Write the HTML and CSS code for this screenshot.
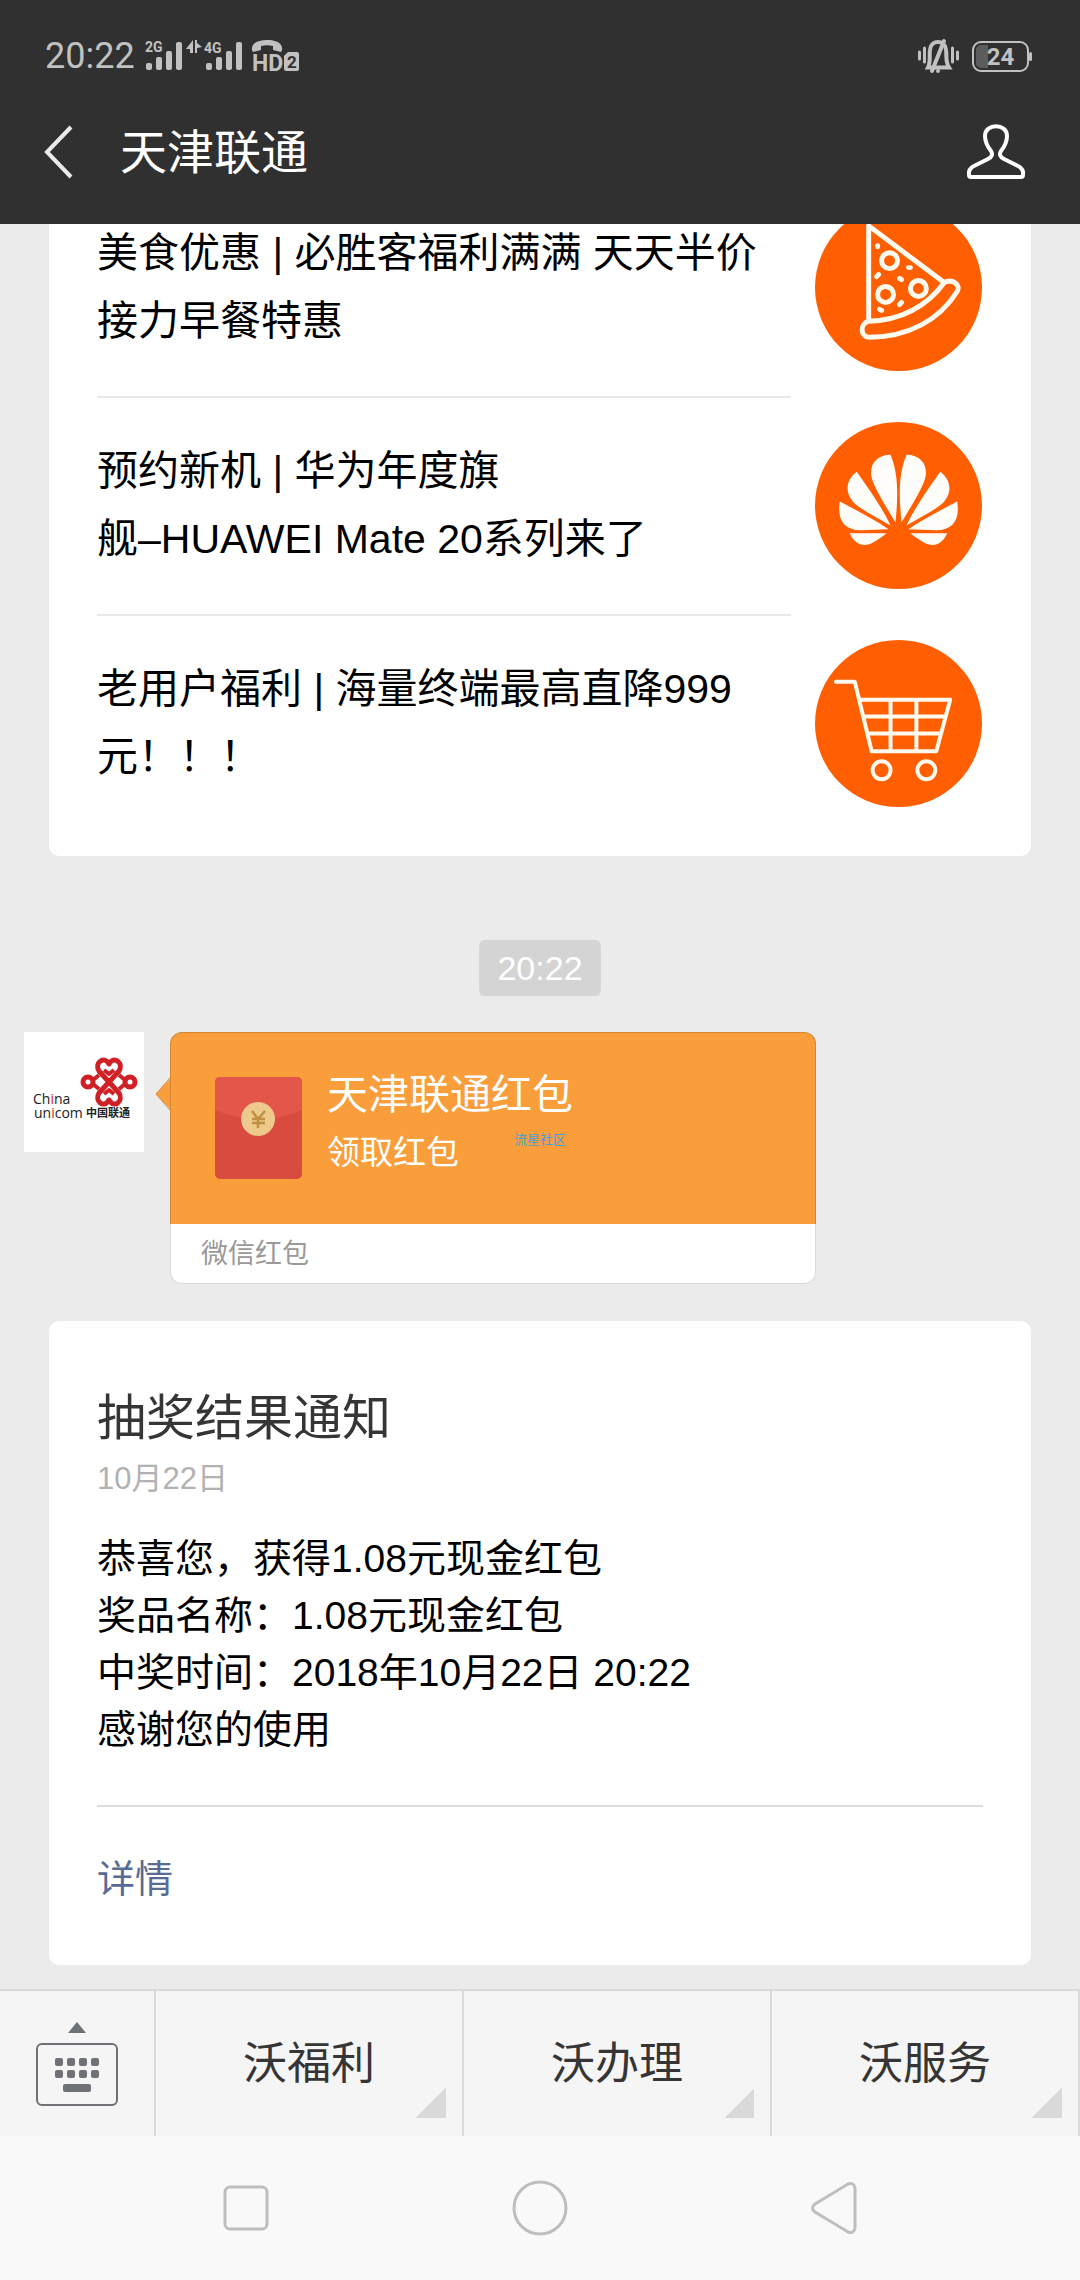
FILE: index.html
```html
<!DOCTYPE html>
<html lang="zh-CN">
<head>
<meta charset="utf-8">
<meta name="viewport" content="width=device-width, initial-scale=1">
<title>天津联通</title>
<link rel="stylesheet" href="styles.css">
</head>
<body>
<header class="top">
  <div class="status">
    <time class="clock">20:22</time>
    <svg class="signals" viewBox="142 36 160 38" width="160" height="38" fill="#c1c1c1" aria-hidden="true">
      <text x="145" y="51" class="net">2G</text>
      <rect x="146" y="62" width="6" height="7" rx="2"/><rect x="156" y="56" width="6" height="13" rx="2"/><rect x="166" y="50" width="6" height="19" rx="2"/><rect x="176" y="41" width="6" height="28" rx="2"/>
      <path d="M193 39v13h-3v-4h-4zM195 39h2v3l5 4-5 1v5h-2z"/>
      <text x="204" y="52" class="net">4G</text>
      <rect x="206" y="62" width="6" height="7" rx="2"/><rect x="216" y="56" width="6" height="13" rx="2"/><rect x="226" y="50" width="6" height="19" rx="2"/><rect x="236" y="41" width="6" height="28" rx="2"/>
      <path d="M252 49c-1-7 6-10 15-10s16 3 15 10l-1 2-8-2v-4c-4-1-8-1-12 0v4l-8 2z"/>
      <text x="252" y="70" class="hd">HD</text>
      <path d="M288 51h9a2 2 0 0 1 2 2v15a2 2 0 0 1-2 2h-11a2 2 0 0 1-2-2V55z"/>
      <text x="287" y="67" class="slot">2</text>
    </svg>
    <svg class="vibrate" viewBox="917 36 44 38" width="44" height="38" fill="none" stroke="#c1c1c1" stroke-width="3" stroke-linecap="round" aria-hidden="true">
      <path d="M919.500 51v7M924.500 47v14M952.500 47v14M957.500 51v7"/>
      <path d="M928 66.500h21c-4-6-2-12-3-18-1-10-15-10-16 0-1 6 1 12-2 18z" stroke-width="4" stroke-linecap="butt"/>
      <path d="M944 40l-12 30M938 70v0" stroke-width="4"/>
    </svg>
    <div class="battery"><span>24</span></div>
  </div>
  <div class="titlebar">
    <button class="icon-btn" aria-label="返回">
      <svg viewBox="0 0 30 54" width="30" height="54" fill="none" stroke="#ebebeb" stroke-width="4"><path d="M27 2L3 27l24 25"/></svg>
    </button>
    <h1>天津联通</h1>
    <button class="icon-btn" aria-label="公众号资料">
      <svg viewBox="0 0 58 56" width="58" height="56" fill="none" stroke="#fff" stroke-width="4"><path d="M2 51q-1-6 5-9l14-7q6-3 3-8c-4-5-6-9-6-15 0-13 22-13 22 0 0 6-2 10-6 15q-3 5 3 8l14 7q6 3 5 9 0 2-2 2H4q-2 0-2-2z"/></svg>
    </button>
  </div>
</header>

<main class="chat">
  <section class="card articles">
    <a class="article" href="#">
      <span class="headline">美食优惠 | 必胜客福利满满 天天半价接力早餐特惠</span>
      <svg class="thumb" viewBox="0 0 168 168" fill="none" stroke="#fffaf0" stroke-width="5" stroke-linecap="round" stroke-linejoin="round" aria-hidden="true">
        <circle cx="84" cy="84" r="84" fill="#ff5f00" stroke="none"/>
        <path d="M54 118V22l76 57c-17 24-44 38-76 39zM130 79c8-4 17 2 13 9-18 29-50 46-88 46-10 0-10-14-1-16"/>
        <circle cx="75" cy="57" r="8"/><circle cx="104" cy="85" r="8"/><circle cx="71" cy="91" r="8"/>
        <path d="M63 42v1M64 71l-2 2M94 64h2M85 75l2 1M85 101l2-2M65 106l2 1"/>
      </svg>
    </a>
    <a class="article" href="#">
      <span class="headline">预约新机 | 华为年度旗<br>舰–HUAWEI Mate 20系列来了</span>
      <svg class="thumb" viewBox="0 0 168 168" fill="#fffdfa" aria-hidden="true">
        <circle cx="84" cy="84" r="84" fill="#ff5f00"/>
        <g id="petals">
          <path d="M76 33C60 33 53 46 58 59c3 9 15 29 23 42 2-22 4-46-5-68z"/>
          <path d="M42 50C31 58 30 71 38 80c6 7 26 17 38 24-8-17-22-37-34-54z"/>
          <path d="M25 80c-3 18 4 29 21 29l28-1C60 98 42 89 25 80z"/>
          <path d="M35 112c5 11 13 14 22 10 6-3 11-7 15-10z"/>
        </g>
        <use href="#petals" transform="matrix(-1 0 0 1 168 0)"/>
      </svg>
    </a>
    <a class="article" href="#">
      <span class="headline">老用户福利 | 海量终端最高直降999元！！！</span>
      <svg class="thumb" viewBox="0 0 168 168" fill="none" stroke="#fffaf0" stroke-width="4" stroke-linecap="round" stroke-linejoin="round" aria-hidden="true">
        <circle cx="84" cy="84" r="84" fill="#ff5f00" stroke="none"/>
        <path d="M21 42h19l17 70h65l14-52H46M50 77h81M54 94h73M76 60v52M102 60v52"/>
        <circle cx="67" cy="131" r="9"/><circle cx="112" cy="131" r="9"/>
      </svg>
    </a>
  </section>

  <time class="stamp">20:22</time>

  <div class="message">
    <svg class="avatar" viewBox="0 0 120 120" width="120" height="120" role="img" aria-label="中国联通">
      <rect width="120" height="120" fill="#fff"/>
      <g fill="none" stroke="#d11f26" stroke-width="5" stroke-linejoin="round">
        <path d="M75 61l20-22c5-8-5-16-10-7-5-9-15-1-10 7l20 22c5 8-5 16-10 7-5 9-15 1-10-7z"/>
        <circle cx="64" cy="50" r="5"/><circle cx="106" cy="50" r="5"/>
        <path d="M69 48l6-5M69 52l6 5M101 48l-6-5M101 52l-6 5M80 38l5 4 5-4M80 62l5-4 5 4" stroke-width="4"/>
      </g>
      <text x="9" y="72" class="brand">Ch<tspan fill="#d11f26">i</tspan>na</text>
      <text x="10" y="86" class="brand">un<tspan fill="#d11f26">i</tspan>com</text>
      <text x="62" y="85" class="brand-cn">中国联通</text>
    </svg>
    <a class="packet" href="#">
      <svg class="tail" viewBox="0 0 16 34" width="16" height="34" aria-hidden="true"><path d="M16 1L1 17l15 16z" fill="#fa9d3b"/><path d="M15 1L1 17l14 16" fill="none" stroke="#d48634"/></svg>
      <div class="packet-body">
        <svg viewBox="0 0 87 102" width="87" height="102" aria-hidden="true">
          <rect width="87" height="102" rx="5" fill="#d84b3e"/>
          <path d="M0 33V5a5 5 0 0 1 5-5h77a5 5 0 0 1 5 5v28q-43 19-87 0z" fill="#e4554a"/>
          <circle cx="43" cy="42" r="17" fill="#edc98c"/>
          <path d="M37 34l6 8 7-8M43 42v9M37 42h13M37 46h13" stroke="#bf8f43" stroke-width="2.500" fill="none"/>
        </svg>
        <div class="packet-text">
          <strong>天津联通红包</strong>
          <span>领取红包</span>
        </div>
        <small class="mark">流星社区</small>
      </div>
      <div class="packet-foot">微信红包</div>
    </a>
  </div>

  <section class="card notice">
    <h2>抽奖结果通知</h2>
    <time class="date">10月22日</time>
    <p>恭喜您，获得1.08元现金红包<br>奖品名称：1.08元现金红包<br>中奖时间：2018年10月22日 20:22<br>感谢您的使用</p>
    <a class="detail" href="#">详情</a>
  </section>
</main>

<footer>
  <div class="menu">
    <button class="keyboard" aria-label="切换键盘">
      <svg viewBox="0 0 84 84" width="84" height="84" fill="#6e7277" aria-hidden="true">
        <path d="M33 11l9-11 9 11z"/>
        <rect x="2" y="22" width="80" height="61" rx="5" fill="none" stroke="#6e7277" stroke-width="2"/>
        <g id="keys"><rect x="20" y="36" width="8" height="8" rx="2"/><rect x="32" y="36" width="8" height="8" rx="2"/><rect x="44" y="36" width="8" height="8" rx="2"/><rect x="56" y="36" width="8" height="8" rx="2"/></g>
        <use href="#keys" y="12"/>
        <rect x="28" y="62" width="28" height="8" rx="2"/>
      </svg>
    </button>
    <button class="entry">沃福利</button>
    <button class="entry">沃办理</button>
    <button class="entry">沃服务</button>
  </div>
  <nav class="sysnav">
    <button aria-label="最近任务"><svg viewBox="0 0 56 56" width="56" height="56"><rect x="7" y="7" width="42" height="42" rx="5"/></svg></button>
    <button aria-label="主屏幕"><svg viewBox="0 0 56 56" width="56" height="56"><circle cx="28" cy="28" r="26"/></svg></button>
    <button aria-label="返回"><svg viewBox="0 0 56 56" width="56" height="56"><path d="M9 24L42 4q6-2 7 4v40q-1 6-7 4L9 32q-5-4 0-8z"/></svg></button>
  </nav>
</footer>
</body>
</html>
```
FILE: styles.css
```css
* { box-sizing: border-box; }

body {
  margin: 0;
  height: 100vh;
  display: flex;
  flex-direction: column;
  background: #ebebeb;
  color: #000;
  font-family: "Liberation Sans", "Noto Sans CJK SC", sans-serif;
}

h1, h2, p { margin: 0; font-weight: 400; }
a { color: inherit; text-decoration: none; }
button { padding: 0; border: 0; background: none; color: inherit; font: inherit; }
svg { display: block; flex: none; }

/* Status bar and title */
.top { flex: none; background: #303030; color: #fff; }

.status {
  display: flex;
  align-items: center;
  height: 112px;
  padding: 0 51px 0 45px;
  color: #c1c1c1;
  font-family: Roboto, sans-serif;
}
.clock { font-size: 36px; line-height: 40px; }
.signals { margin-left: 7px; overflow: visible; }
.net { font: 700 14px Roboto, sans-serif; }
.hd { font: 700 23px Roboto, sans-serif; }
.slot { font: 700 17px Roboto, sans-serif; fill: #303030; }
.vibrate { margin-left: auto; }
.battery {
  position: relative;
  width: 57px;
  height: 31px;
  margin-left: 11px;
  padding: 2px;
  border: 2px solid #c1c1c1;
  border-radius: 9px;
  background: linear-gradient(90deg, #5c5c5c 12px, transparent 12px) content-box;
  font-size: 24px;
  font-weight: 700;
  line-height: 24px;
  text-align: center;
}
.battery::after {
  content: "";
  position: absolute;
  left: 55px;
  top: 9px;
  width: 3px;
  height: 9px;
  border-radius: 2px;
  background: #c1c1c1;
}

.titlebar {
  display: flex;
  align-items: center;
  height: 112px;
  padding: 0 55px 32px 44px;
}
.titlebar h1 { flex: 1; margin-left: 46px; padding-top: 2px; font-size: 47px; line-height: 64px; }

/* Conversation, kept scrolled to its newest message */
.chat {
  flex: 1;
  min-height: 0;
  overflow: hidden;
  display: flex;
  flex-direction: column;
  justify-content: flex-end;
  padding-bottom: 24px;
}
.chat > * { flex: none; }

.card {
  margin: 0 49px;
  padding: 0 48px;
  border-radius: 10px;
  background: #fff;
}

.articles { padding-bottom: 24px; }
.article {
  display: grid;
  grid-template-columns: 1fr 168px;
  column-gap: 24px;
  align-items: start;
}
.headline {
  padding: 39px 24px 41px 0;
  border-bottom: 2px solid #e8e8e8;
  font-size: 41px;
  line-height: 68px;
}
.article:last-child .headline { border-bottom: 0; }
.thumb { width: 167px; height: 167px; margin-top: 24px; }

.stamp {
  align-self: center;
  margin: 84px 0 36px;
  padding: 0 18px;
  border-radius: 6px;
  background: #d4d4d4;
  color: #fff;
  font-size: 34px;
  line-height: 56px;
}

.message { display: flex; align-items: flex-start; gap: 26px; margin: 0 24px 37px; }
.brand { font: 14px "Open Sans", sans-serif; fill: #222; }
.brand-cn { font: 700 11px "Noto Sans CJK SC", sans-serif; fill: #222; }

.packet { position: relative; width: 646px; }
.tail { position: absolute; left: -15px; top: 45px; }
.packet-body {
  position: relative;
  display: flex;
  gap: 25px;
  height: 192px;
  padding: 44px;
  border: 1px solid #d48634;
  border-bottom: 0;
  border-radius: 12px 12px 0 0;
  background: #fa9d3b;
  color: #fff;
}
.packet-text { display: flex; flex-direction: column; margin-top: -10px; }
.packet-text strong { font-size: 41px; font-weight: 400; line-height: 56px; }
.packet-text span { font-size: 33px; line-height: 60px; }
.mark {
  position: absolute;
  left: 343px;
  top: 97px;
  color: #4a9fd4;
  font-size: 13px;
  line-height: 20px;
}
.packet-foot {
  padding: 1px 30px 0;
  border: 1px solid #dadada;
  border-top: 0;
  border-radius: 0 0 12px 12px;
  background: #fff;
  color: #999;
  font-size: 27px;
  line-height: 58px;
}

.notice { padding-top: 67px; }
.notice h2 { color: #353535; font-size: 49px; line-height: 60px; }
.date { display: block; margin: 9px 0 29px; color: #b2b2b2; font-size: 31px; line-height: 44px; }
.notice p { font-size: 39px; line-height: 57px; }
.detail {
  display: block;
  margin-top: 47px;
  padding: 44px 0 57px;
  border-top: 2px solid #dcdcdc;
  color: #576b95;
  font-size: 38px;
  line-height: 57px;
}

/* Account menu */
footer { flex: none; }
.menu {
  display: grid;
  grid-template-columns: 156px 1fr 1fr 1fr;
  height: 147px;
  border-top: 2px solid #d9d9d9;
  background: #f5f5f5;
  color: #353535;
}
.menu button { border-right: 2px solid #d9d9d9; }
.keyboard { display: grid; place-items: center; }
.entry { position: relative; font-size: 44px; line-height: 60px; }
.entry::after {
  content: "";
  position: absolute;
  right: 16px;
  bottom: 18px;
  width: 30px;
  height: 30px;
  background: linear-gradient(135deg, transparent 50%, #d9d9d9 50%);
}

/* System navigation */
.sysnav {
  display: flex;
  justify-content: center;
  align-items: center;
  gap: 238px;
  height: 144px;
  background: #f9f9f9;
}
.sysnav svg { fill: none; stroke: #bebebe; stroke-width: 3px; }
```
